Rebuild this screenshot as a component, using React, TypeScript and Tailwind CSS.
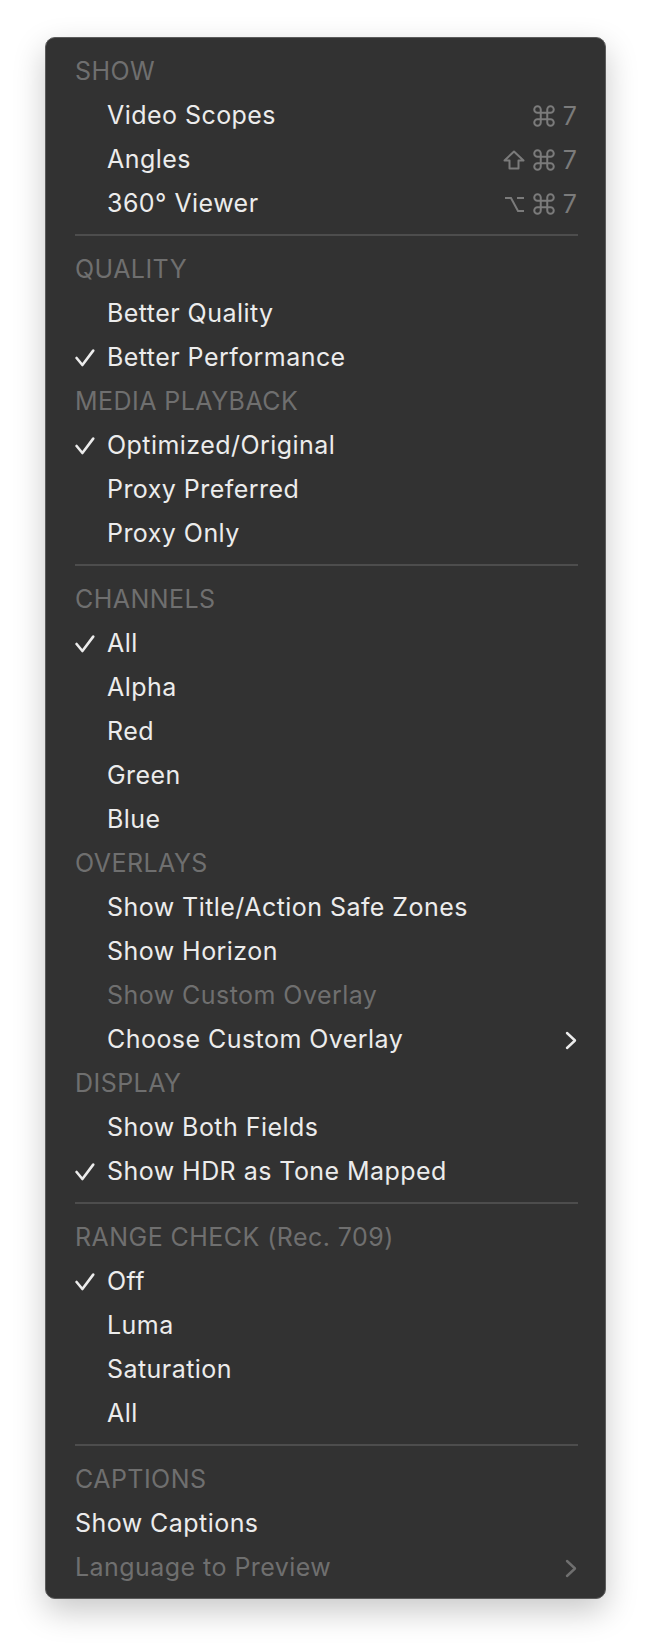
import { ReactNode } from "react";
import { Command } from "lucide-react";

type Item = {
  label: string;
  checked?: boolean;
  disabled?: boolean;
  shortcut?: string[];
  submenu?: boolean;
};

type Section = {
  title: string;
  items: Item[];
  indent?: boolean;
  separator?: boolean;
};

const sections: Section[] = [
  {
    title: "SHOW",
    indent: true,
    separator: true,
    items: [
      { label: "Video Scopes", shortcut: ["cmd", "7"] },
      { label: "Angles", shortcut: ["shift", "cmd", "7"] },
      { label: "360° Viewer", shortcut: ["opt", "cmd", "7"] },
    ],
  },
  {
    title: "QUALITY",
    indent: true,
    items: [{ label: "Better Quality" }, { label: "Better Performance", checked: true }],
  },
  {
    title: "MEDIA PLAYBACK",
    indent: true,
    separator: true,
    items: [
      { label: "Optimized/Original", checked: true },
      { label: "Proxy Preferred" },
      { label: "Proxy Only" },
    ],
  },
  {
    title: "CHANNELS",
    indent: true,
    items: [
      { label: "All", checked: true },
      { label: "Alpha" },
      { label: "Red" },
      { label: "Green" },
      { label: "Blue" },
    ],
  },
  {
    title: "OVERLAYS",
    indent: true,
    items: [
      { label: "Show Title/Action Safe Zones" },
      { label: "Show Horizon" },
      { label: "Show Custom Overlay", disabled: true },
      { label: "Choose Custom Overlay", submenu: true },
    ],
  },
  {
    title: "DISPLAY",
    indent: true,
    separator: true,
    items: [{ label: "Show Both Fields" }, { label: "Show HDR as Tone Mapped", checked: true }],
  },
  {
    title: "RANGE CHECK (Rec. 709)",
    indent: true,
    separator: true,
    items: [
      { label: "Off", checked: true },
      { label: "Luma" },
      { label: "Saturation" },
      { label: "All" },
    ],
  },
  {
    title: "CAPTIONS",
    items: [
      { label: "Show Captions" },
      { label: "Language to Preview", disabled: true, submenu: true },
    ],
  },
];

function Check() {
  return (
    <svg width="20" height="18" viewBox="0 0 20 18" className="block">
      <path
        d="M1.6 9 L7.4 16 L18.2 1.6"
        fill="none"
        stroke="#ececec"
        strokeWidth="2.6"
        strokeLinecap="round"
        strokeLinejoin="round"
      />
    </svg>
  );
}

function Chevron({ color }: { color: string }) {
  return (
    <svg width="12" height="19" viewBox="0 0 12 19" className="block">
      <path
        d="M2 2 L10 9.5 L2 17"
        fill="none"
        stroke={color}
        strokeWidth="2.4"
        strokeLinecap="round"
        strokeLinejoin="round"
      />
    </svg>
  );
}

function ShiftKey() {
  return (
    <svg width="22" height="20" viewBox="0 0 22 20" className="block">
      <path
        d="M11 1.5 L20.5 10.5 H15.5 V18.5 H6.5 V10.5 H1.5 Z"
        fill="none"
        stroke="currentColor"
        strokeWidth="2"
        strokeLinejoin="round"
      />
    </svg>
  );
}

function OptionKey() {
  return (
    <svg width="21" height="17" viewBox="0 0 21 17" className="block">
      <path
        d="M1 2 H7 L14 15 H20 M13 2 H20"
        fill="none"
        stroke="currentColor"
        strokeWidth="2"
      />
    </svg>
  );
}

function Shortcut({ keys }: { keys: string[] }) {
  return (
    <div className="flex items-center gap-[6px] text-[#7b7b7b]">
      {keys.map((k, i) => {
        if (k === "cmd") return <Command key={i} size={26} strokeWidth={2} absoluteStrokeWidth />;
        if (k === "shift") return <ShiftKey key={i} />;
        if (k === "opt") return <OptionKey key={i} />;
        return (
          <span key={i} className="text-[25px] leading-none">
            {k}
          </span>
        );
      })}
    </div>
  );
}

function Row({ children }: { children: ReactNode }) {
  return <div className="flex h-[44px] items-center pl-[29px] pr-[28px]">{children}</div>;
}

export default function App() {
  return (
    <div className="h-[1652px] w-[652px] bg-white pl-[45px] pt-[37px] font-['Inter',sans-serif]">
      <div className="w-[561px] rounded-[10px] border border-[#5c5c5c] bg-[#323232] pb-[8px] pt-[12px] shadow-[0_12px_32px_rgba(0,0,0,0.22)]">
        {sections.map((s) => (
          <div key={s.title}>
            <Row>
              <span className="text-[25px] tracking-[0.45px] text-[#6f6f6f]">{s.title}</span>
            </Row>
            {s.items.map((it) => (
              <Row key={it.label}>
                {s.indent && (
                  <div className="w-[32px] shrink-0">{it.checked && <Check />}</div>
                )}
                <span
                  className={
                    "flex-1 text-[25px] tracking-[0.45px] " +
                    (it.disabled ? "text-[#6f6f6f]" : "text-[#ececec]")
                  }
                >
                  {it.label}
                </span>
                {it.shortcut && <Shortcut keys={it.shortcut} />}
                {it.submenu && <Chevron color={it.disabled ? "#6f6f6f" : "#ececec"} />}
              </Row>
            ))}
            {s.separator && (
              <div className="pb-[12px] pl-[29px] pr-[27px] pt-[8px]">
                <div className="h-[2px] bg-[#4d4d4d]" />
              </div>
            )}
          </div>
        ))}
      </div>
    </div>
  );
}
